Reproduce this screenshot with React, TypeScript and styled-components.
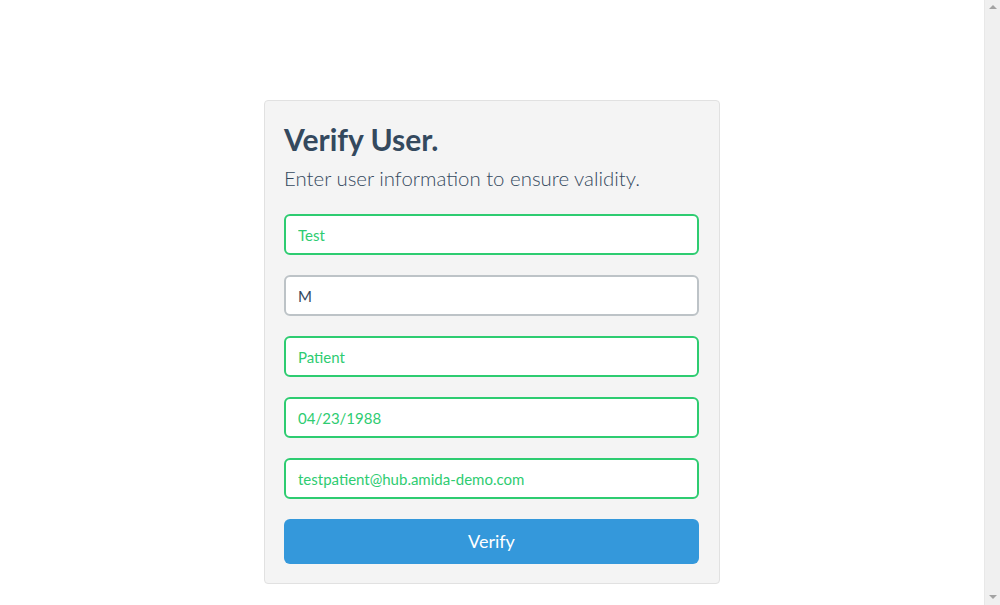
import React from "react";
import styled, { createGlobalStyle } from "styled-components";

const Global = createGlobalStyle`
  html, body { height: 100%; }
  body {
    margin: 0;
    background: #ffffff;
    font-family: Lato, "Open Sans", sans-serif;
    color: #34495e;
    overflow: hidden;
  }
  #root { height: 100%; }
  * { box-sizing: border-box; }
`;

const Layout = styled.div`
  display: flex;
  height: 100vh;
`;

const Main = styled.main`
  flex: 1;
  display: flex;
  justify-content: center;
  align-items: flex-start;
  padding-top: 100px;
`;

const ScrollTrack = styled.div`
  width: 16px;
  height: 100%;
  background: #f0f0f0;
  border-left: 1px solid #e8e8e8;
  display: flex;
  flex-direction: column;
  justify-content: space-between;
  align-items: center;
  padding: 5px 0 6px 0;
`;

const Arrow = styled.div<{ $down?: boolean }>`
  width: 0;
  height: 0;
  border-left: 4px solid transparent;
  border-right: 4px solid transparent;
  ${(p) =>
    p.$down
      ? "border-top: 4px solid #a3a3a3;"
      : "border-bottom: 4px solid #a3a3a3;"}
`;

const Card = styled.form`
  width: 456px;
  background: #f4f4f4;
  border: 1px solid #e1e1e1;
  border-radius: 4px;
  padding: 18px 20px 19px 19px;
  display: flex;
  flex-direction: column;
`;

const Title = styled.h3`
  margin: 0;
  font-family: Lato, sans-serif;
  font-weight: 700;
  font-size: 30px;
  line-height: 40px;
  color: #34495e;
`;

const Subtitle = styled.p`
  margin: 4px 0 21px 0;
  font-family: Lato, sans-serif;
  font-weight: 300;
  font-size: 20.4px;
  line-height: 30px;
  color: #34495e;
`;

const Field = styled.input<{ $valid?: boolean }>`
  width: 100%;
  height: 41px;
  margin: 0 0 20px 0;
  padding: 0 12px;
  border: 2px solid ${(p) => (p.$valid ? "#2ecc71" : "#bdc3c7")};
  border-radius: 6px;
  background: #ffffff;
  font-family: Lato, sans-serif;
  font-size: 15px;
  color: ${(p) => (p.$valid ? "#2ecc71" : "#34495e")};
  outline: none;
`;

const Button = styled.button`
  width: 100%;
  height: 45px;
  border: none;
  border-radius: 6px;
  background: #3498db;
  color: #ffffff;
  font-family: Lato, sans-serif;
  font-size: 18px;
  font-weight: 400;
  padding: 0 0 2px 0;
  cursor: pointer;
`;

const fields = [
  { value: "Test", valid: true },
  { value: "M", valid: false },
  { value: "Patient", valid: true },
  { value: "04/23/1988", valid: true },
  { value: "testpatient@hub.amida-demo.com", valid: true },
];

export default function App() {
  return (
    <>
      <Global />
      <Layout>
        <Main>
          <Card onSubmit={(e) => e.preventDefault()}>
            <Title>Verify User.</Title>
            <Subtitle>Enter user information to ensure validity.</Subtitle>
            {fields.map((f, i) => (
              <Field key={i} $valid={f.valid} defaultValue={f.value} />
            ))}
            <Button type="submit">Verify</Button>
          </Card>
        </Main>
        <ScrollTrack>
          <Arrow />
          <Arrow $down />
        </ScrollTrack>
      </Layout>
    </>
  );
}
